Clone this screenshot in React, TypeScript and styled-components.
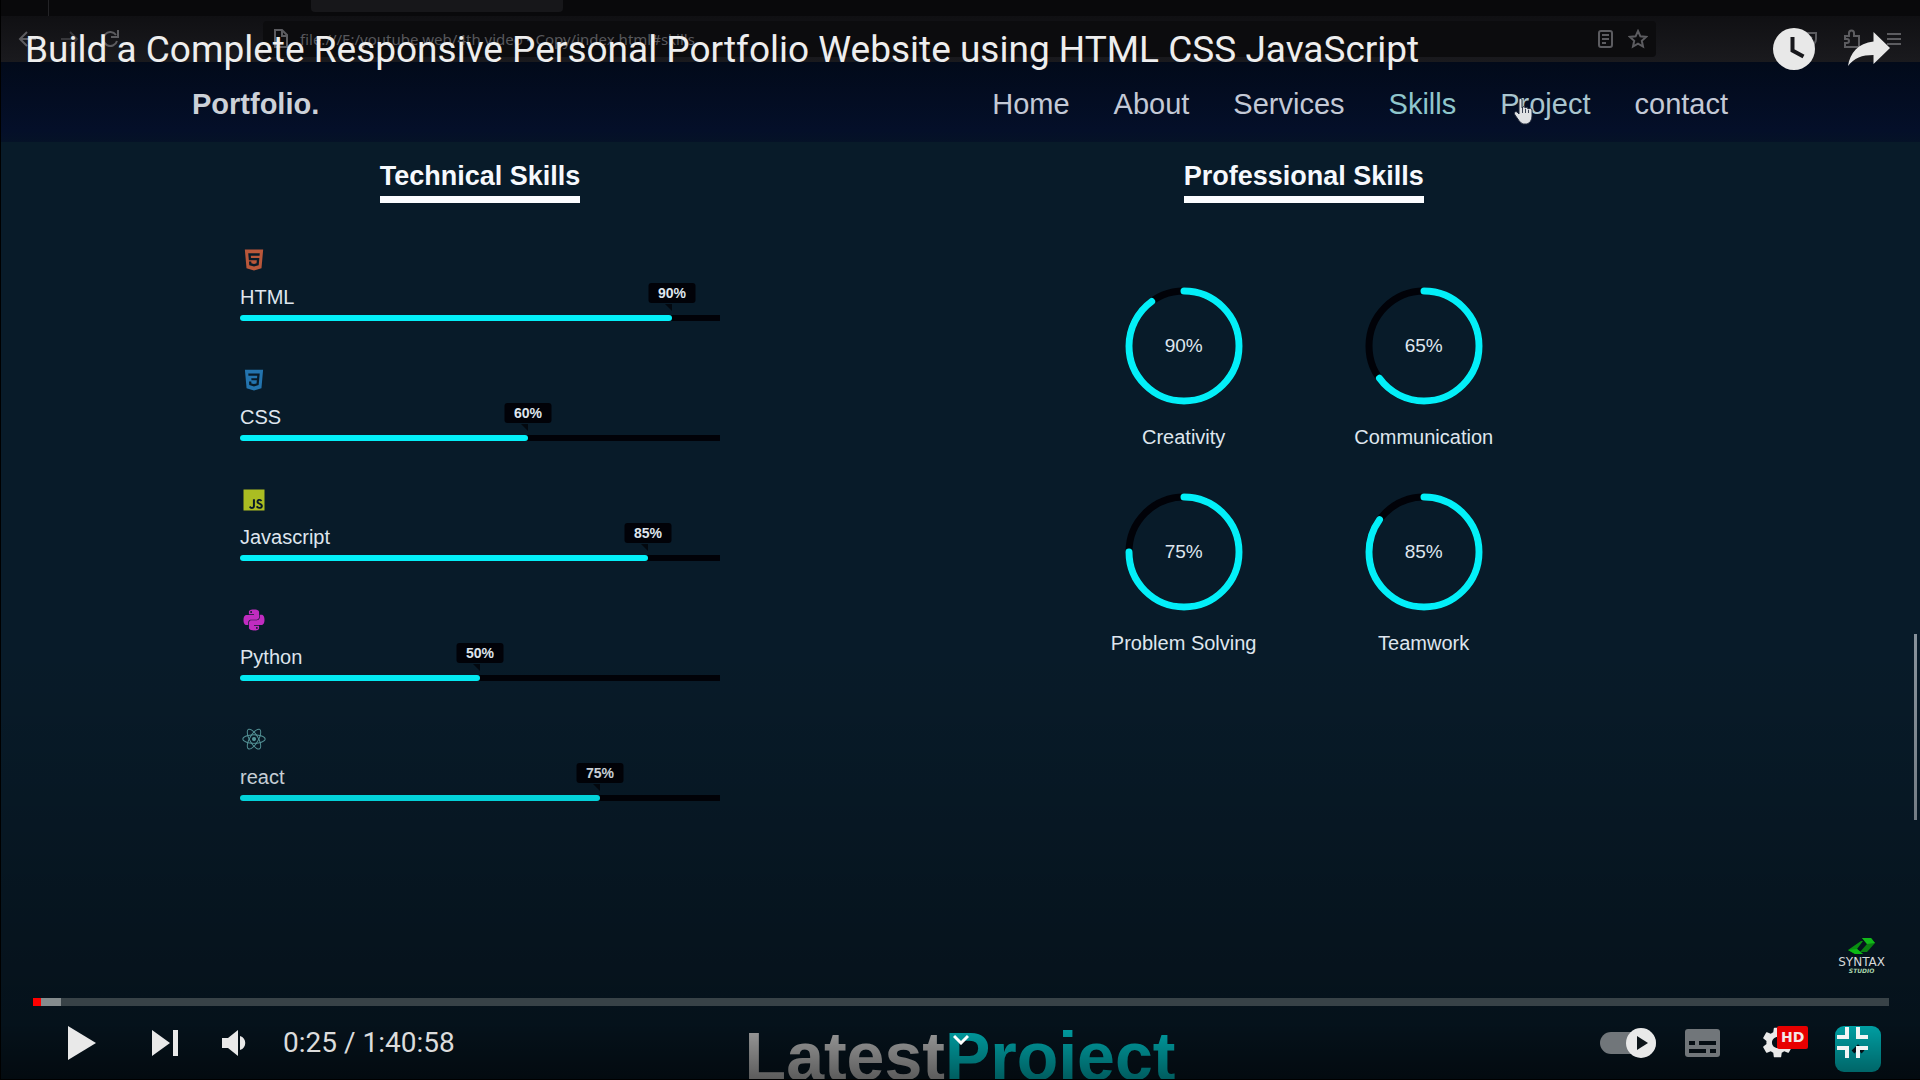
import React from "react";
import styled, { createGlobalStyle } from "styled-components";
import {
  BiLogoCss3,
  BiLogoHtml5,
  BiLogoJavascript,
  BiLogoPython,
  BiLogoReact,
} from "react-icons/bi";
import { MdSettings } from "react-icons/md";

const sans = `"Liberation Sans", Arial, sans-serif`;
const roboto = `Roboto, sans-serif`;

const GlobalStyle = createGlobalStyle`
  *, *::before, *::after { box-sizing: border-box; }
  body { margin: 0; background: #000; color: #dfe6ee; font-family: ${sans}; }
  h1, h2, h3, p, ul { margin: 0; padding: 0; }
  ul { list-style: none; }
  a { color: inherit; text-decoration: none; }
  button { border: 0; padding: 0; background: none; color: inherit; cursor: pointer; }
  svg { display: block; }
`;

const Stage = styled.div`
  position: relative;
  height: 100vh;
  overflow: hidden;
  border-bottom: 1px solid #000;
  background: #081b29;
`;

/* ---------- recorded browser window ---------- */

const TabStrip = styled.div`
  display: flex;
  height: 16px;
  background: #09090b;
`;

const PinnedTab = styled.div`
  width: 49px;
  border-right: 1px solid #232326;
`;

const ActiveTab = styled.div`
  width: 252px;
  height: 12px;
  margin-left: 262px;
  border-radius: 0 0 4px 4px;
  background: #17171a;
`;

const Toolbar = styled.div`
  display: flex;
  align-items: center;
  height: 46px;
  padding: 0 18px;
  background: linear-gradient(#101013, #1a1a1e);
  color: #5c5c60;
`;

const ToolGroup = styled.div<{ $gap: number }>`
  display: flex;
  align-items: center;
  gap: ${(p) => p.$gap}px;
`;

const AddressBar = styled.div`
  display: flex;
  align-items: center;
  gap: 11px;
  flex: 1;
  height: 36px;
  margin: 0 144px 0 143px;
  padding: 0 8px 0 10px;
  border-radius: 4px;
  background: #0c0c0e;
  font: 15px/24px "Noto Sans", sans-serif;
`;

const Address = styled.span`
  flex: 1;
  white-space: nowrap;
  color: #58585c;
`;

/* ---------- portfolio page ---------- */

const NavBar = styled.header`
  display: flex;
  align-items: center;
  justify-content: space-between;
  height: 80px;
  padding: 4px 10% 0;
  background: linear-gradient(#020a1a, #040f29 85%, #051227);
`;

const Brand = styled.a`
  color: #ccd1d8;
  font-size: 29px;
  line-height: 32px;
  font-weight: 700;
`;

const NavLinks = styled.nav`
  display: flex;
  gap: 44px;
  font-size: 29px;
  line-height: 32px;
`;

const NavLink = styled.a<{ $tone?: string }>`
  position: relative;
  color: ${(p) => p.$tone ?? "#c3c9d6"};
`;

const Hand = styled.svg`
  position: absolute;
  left: 13px;
  top: 9px;
`;

const Skills = styled.main`
  display: grid;
  grid-template-columns: 1fr 1fr;
  column-gap: 17.9vw;
  padding: 18px 19.6% 215px 12.5%;
`;

const Column = styled.section`
  display: flex;
  flex-direction: column;
  align-items: center;
`;

const ColumnTitle = styled.h2`
  padding-bottom: 4px;
  border-bottom: 7px solid #fbfdff;
  color: #f6f9fd;
  font-size: 27px;
  line-height: 32px;
`;

const SkillList = styled.ul`
  display: grid;
  row-gap: 45px;
  width: 100%;
  margin-top: 43px;
`;

const SkillIcon = styled.span<{ $color: string }>`
  display: block;
  color: ${(p) => p.$color};
`;

const SkillName = styled.h3`
  margin-top: 11px;
  font-size: 20px;
  line-height: 24px;
  font-weight: 400;
`;

const Track = styled.div`
  height: 6px;
  margin-top: 6px;
  border-radius: 3px 0 0 3px;
  background: #010208;
`;

const Fill = styled.div`
  position: relative;
  height: 6px;
  border-radius: 3px;
  background: #03eff8;
`;

const Bubble = styled.span`
  position: absolute;
  right: 0;
  bottom: 18px;
  transform: translateX(50%);
  width: 47px;
  border-radius: 3px;
  background: #010208;
  font-size: 14px;
  line-height: 20px;
  font-weight: 700;
  text-align: center;
`;

const Notch = styled.span`
  position: absolute;
  right: 0;
  bottom: 10px;
  border-top: 7px solid #03080f;
  border-left: 7px solid transparent;
`;

const DialGrid = styled.div`
  display: grid;
  grid-template-columns: 1fr 1fr;
  row-gap: 43px;
  width: 100%;
  margin-top: 83px;
`;

const Dial = styled.figure`
  display: flex;
  flex-direction: column;
  align-items: center;
  margin: 0;
`;

const DialFace = styled.div`
  display: grid;
  place-items: center;
  font-size: 19px;
  line-height: 24px;
  & > * {
    grid-area: 1 / 1;
  }
`;

const DialLabel = styled.figcaption`
  margin-top: 19px;
  font-size: 20px;
  line-height: 24px;
`;

const NextHeading = styled.h2`
  color: #f2f2f2;
  font-size: 68px;
  line-height: 80px;
  text-align: center;
  span {
    color: #00f4fa;
  }
`;

const BackToTop = styled.a`
  position: absolute;
  right: 39px;
  bottom: 7px;
  display: grid;
  place-items: center;
  width: 46px;
  height: 46px;
  border-radius: 9px;
  background: #00f4fa;
`;

const PageScroll = styled.div`
  position: absolute;
  right: 3px;
  top: 634px;
  width: 3px;
  height: 186px;
  background: #87919a;
`;

/* ---------- video player ---------- */

const Player = styled.div`
  position: absolute;
  inset: 0;
  display: flex;
  flex-direction: column;
  border-left: 1px solid #000;
  color: #e9e9e9;
  font-family: ${roboto};
  background: linear-gradient(
    transparent 60%,
    rgba(0, 0, 0, 0.12) 74%,
    rgba(0, 0, 0, 0.25) 85%,
    rgba(0, 0, 0, 0.35) 95%,
    rgba(0, 0, 0, 0.46) 97%,
    rgba(0, 0, 0, 0.62) 100%
  );
`;

const PlayerTop = styled.div`
  display: flex;
  align-items: flex-start;
  padding: 28px 14px 0 24px;
`;

const VideoTitle = styled.h1`
  flex: 1;
  color: #eee;
  font-size: 37px;
  line-height: 44px;
  font-weight: 400;
  white-space: nowrap;
`;

const IconButton = styled.button<{ $width?: number }>`
  display: flex;
  align-items: center;
  justify-content: center;
  width: ${(p) => p.$width ?? 75}px;
  height: 42px;
`;

const Watermark = styled.a`
  display: flex;
  flex-direction: column;
  align-items: center;
  align-self: flex-end;
  margin: auto 35px 24px 0;
  color: #d5d9da;
  font-family: "DejaVu Sans", sans-serif;
`;

const MarkName = styled.span`
  margin-top: 2px;
  font-size: 12px;
  line-height: 11px;
`;

const MarkSub = styled.span`
  color: #a9d3ac;
  font-size: 6px;
  line-height: 6px;
  font-weight: 700;
  font-style: italic;
`;

const Seek = styled.input<{ $played: number; $loaded: number }>`
  appearance: none;
  display: block;
  height: 8px;
  margin: 0 31px 0 32px;
  background: linear-gradient(
    to right,
    #f00 ${(p) => p.$played}%,
    #858c8e ${(p) => p.$played}% ${(p) => p.$loaded}%,
    #384247 ${(p) => p.$loaded}%
  );
  &::-webkit-slider-thumb {
    appearance: none;
    width: 0;
    height: 0;
  }
`;

const Controls = styled.div`
  display: flex;
  align-items: center;
  height: 73px;
  padding: 0 30px 0 32px;
`;

const Time = styled.span`
  flex: 1;
  margin-left: 14px;
  color: #dcdcdc;
  font-size: 28px;
  line-height: 32px;
`;

const Autoplay = styled.label`
  display: flex;
  justify-content: center;
  width: 75px;
`;

const Switch = styled.input`
  appearance: none;
  display: flex;
  align-items: center;
  justify-content: flex-end;
  width: 56px;
  height: 22px;
  margin: 0;
  border-radius: 11px;
  background: #71767a;
  &::before {
    content: "";
    width: 30px;
    height: 30px;
    flex: none;
    border-radius: 50%;
    background: #e9e9e9;
  }
`;

const SwitchBox = styled.span`
  display: grid;
  align-items: center;
  justify-items: end;
  & > * {
    grid-area: 1 / 1;
  }
  svg {
    z-index: 1;
    pointer-events: none;
  }
`;

const Settings = styled(IconButton)`
  position: relative;
`;

const Quality = styled.span`
  position: absolute;
  left: 37px;
  top: 4px;
  padding: 0 4px;
  border-radius: 2px;
  background: #e80000;
  color: #f3e8e8;
  font: 700 14px/23px "DejaVu Sans", sans-serif;
`;

const MoreButton = styled.button`
  position: absolute;
  left: 50%;
  bottom: 34px;
  transform: translateX(-50%);
`;

const skills = [
  { name: "HTML", value: 90, color: "#b9573a", Icon: BiLogoHtml5 },
  { name: "CSS", value: 60, color: "#2374ae", Icon: BiLogoCss3 },
  { name: "Javascript", value: 85, color: "#abbd22", Icon: BiLogoJavascript },
  { name: "Python", value: 50, color: "#c02cc0", Icon: BiLogoPython },
  { name: "react", value: 75, color: "#5a9ea2", Icon: BiLogoReact },
];

const dials = [
  { name: "Creativity", value: 90 },
  { name: "Communication", value: 65 },
  { name: "Problem Solving", value: 75 },
  { name: "Teamwork", value: 85 },
];

const line = { fill: "none", stroke: "currentColor", strokeWidth: 2 } as const;

function BrowserChrome() {
  return (
    <>
      <TabStrip>
        <PinnedTab />
        <ActiveTab />
      </TabStrip>
      <Toolbar>
        <ToolGroup $gap={21}>
          <svg width="20" height="20" {...line}>
            <path d="M18 10H3M9 3l-7 7 7 7" />
          </svg>
          <svg width="20" height="20" {...line} opacity=".5">
            <path d="M2 10h15M11 3l7 7-7 7" />
          </svg>
          <svg width="20" height="20" {...line}>
            <path d="M17 12a7 7 0 1 1-1-6M18 1v7h-7" />
          </svg>
        </ToolGroup>
        <AddressBar>
          <svg width="16" height="20" {...line}>
            <path d="M2 1h7l5 5v12H2zM9 1v6h5" />
          </svg>
          <Address>file:///E:/youtube web/4th video - Copy/index.html#skills</Address>
          <ToolGroup $gap={14}>
            <svg width="16" height="18" {...line}>
              <rect x="1" y="1" width="13" height="16" rx="2" />
              <path d="M4 5h7M4 9h7M4 13h4" />
            </svg>
            <svg width="20" height="20" {...line}>
              <path d="M10 2l2.400 5.300 5.600.6-4.200 3.900 1.200 5.700-5-2.900-5 2.900 1.200-5.700L2 7.900l5.600-.6z" />
            </svg>
          </ToolGroup>
        </AddressBar>
        <ToolGroup $gap={25}>
          <svg width="18" height="16" {...line}>
            <path d="M2 2h14v6a7 7 0 0 1-14 0zM6 6l3 3 3-3" />
          </svg>
          <svg width="18" height="20" {...line}>
            <path d="M2 7h4V4a2 2 0 0 1 5 0v3h5v11H2v-4h2a2 2 0 0 0 0-4H2z" />
          </svg>
          <svg width="16" height="14" {...line}>
            <path d="M1 2h14M1 7h14M1 12h14" />
          </svg>
        </ToolGroup>
      </Toolbar>
    </>
  );
}

function DialChart({ name, value }: { name: string; value: number }) {
  return (
    <Dial>
      <DialFace>
        <svg width="120" height="120" viewBox="0 0 120 120">
          <circle cx="60" cy="60" r="55" fill="none" stroke="#010208" strokeWidth="7" />
          <circle
            cx="60"
            cy="60"
            r="55"
            fill="none"
            stroke="#03eff8"
            strokeWidth="7"
            strokeLinecap="round"
            pathLength="100"
            strokeDasharray={`${value} 100`}
            transform="rotate(-90 60 60)"
          />
        </svg>
        <span>{value}%</span>
      </DialFace>
      <DialLabel>{name}</DialLabel>
    </Dial>
  );
}

function PortfolioPage() {
  return (
    <>
      <NavBar>
        <Brand href="#home">Portfolio.</Brand>
        <NavLinks>
          <NavLink href="#home">Home</NavLink>
          <NavLink href="#about">About</NavLink>
          <NavLink href="#services">Services</NavLink>
          <NavLink href="#skills" $tone="#8fc6cc">Skills</NavLink>
          <NavLink href="#project" $tone="#a9c5cf">
            Project
            <Hand width="20" height="28" viewBox="0 0 20 28">
              <path
                d="M6 3c0-2 3-2 3 0v8l1-1c1-1 2 0 2 1 1-1 3-1 3 1 1-1 4-1 4 1v6c0 4-2 7-5 8h-4c-3-1-5-5-8-9-2-3 1-4 2-3l2 2z"
                fill="#dfe1e4"
                stroke="#20283a"
                strokeWidth="1"
              />
              <path d="M9.500 11v5M12.500 12v4M15.500 13v3" stroke="#3a4254" strokeWidth="1" />
            </Hand>
          </NavLink>
          <NavLink href="#contact">contact</NavLink>
        </NavLinks>
      </NavBar>
      <Skills id="skills">
        <Column>
          <ColumnTitle>Technical Skills</ColumnTitle>
          <SkillList>
            {skills.map(({ name, value, color, Icon }) => (
              <li key={name}>
                <SkillIcon $color={color}>
                  <Icon size={28} />
                </SkillIcon>
                <SkillName>{name}</SkillName>
                <Track
                  role="progressbar"
                  aria-label={name}
                  aria-valuenow={value}
                  aria-valuemin={0}
                  aria-valuemax={100}
                >
                  <Fill style={{ width: `${value}%` }}>
                    <Bubble>{value}%</Bubble>
                    <Notch />
                  </Fill>
                </Track>
              </li>
            ))}
          </SkillList>
        </Column>
        <Column>
          <ColumnTitle>Professional Skills</ColumnTitle>
          <DialGrid>
            {dials.map((d) => (
              <DialChart key={d.name} {...d} />
            ))}
          </DialGrid>
        </Column>
      </Skills>
      <NextHeading>
        Latest<span>Project</span>
      </NextHeading>
      <PageScroll />
      <BackToTop href="#home" aria-label="Back to top">
        <svg width="14" height="10" viewBox="0 0 14 10">
          <path d="M2 8l5-5 5 5" fill="none" stroke="#081b29" strokeWidth="4" />
        </svg>
      </BackToTop>
    </>
  );
}

function VideoPlayer() {
  return (
    <Player>
      <PlayerTop>
        <VideoTitle>
          Build a Complete Responsive Personal Portfolio Website using HTML CSS JavaScript
        </VideoTitle>
        <IconButton aria-label="Watch later">
          <svg width="42" height="42" viewBox="0 0 42 42">
            <circle cx="21" cy="21" r="21" fill="#e8e8e8" />
            <path d="M19.500 9v13.500l11 6" fill="none" stroke="#17171b" strokeWidth="4" />
          </svg>
        </IconButton>
        <IconButton aria-label="Share">
          <svg width="42" height="34" viewBox="0 0 42 34" fill="#e8e8e8">
            <path d="M25.500 0L42 16 25.500 32v-9C14 23 6 26 0 34 2 21 10 11 25.500 9.500z" />
          </svg>
        </IconButton>
      </PlayerTop>

      <Watermark href="#channel" aria-label="Syntax Studio">
        <svg width="28" height="17" viewBox="0 0 28 17">
          <path d="M13 3L0 12l7 4h8l-6-5 6-8z" fill="#0a8f12" />
          <path d="M0 12l7 4h8l-6-5z" fill="#0bb914" />
          <path d="M14 0h9l4 5-8 9h-7l7-8z" fill="#0a7f11" />
          <path d="M14 0h9l4 5-8 1z" fill="#12b81a" />
        </svg>
        <MarkName>SYNTAX</MarkName>
        <MarkSub>STUDIO</MarkSub>
      </Watermark>

      <Seek
        type="range"
        aria-label="Seek"
        min={0}
        max={6058}
        defaultValue={25}
        $played={0.42}
        $loaded={1.5}
      />
      <Controls>
        <IconButton $width={98} aria-label="Play">
          <svg width="28" height="34" fill="currentColor">
            <path d="M0 0l28 17L0 34z" />
          </svg>
        </IconButton>
        <IconButton $width={68} aria-label="Next">
          <svg width="26" height="26" fill="currentColor">
            <path d="M0 0l18 13L0 26zM21 0h5v26h-5z" />
          </svg>
        </IconButton>
        <IconButton $width={70} aria-label="Mute">
          <svg width="24" height="26" fill="currentColor">
            <path d="M0 8h6l10-8v26L6 18H0zM18 6c7 2 7 12 0 14z" />
          </svg>
        </IconButton>
        <Time>0:25 / 1:40:58</Time>
        <Autoplay>
          <SwitchBox>
            <Switch type="checkbox" defaultChecked aria-label="Autoplay" />
            <svg width="30" height="30" viewBox="0 0 30 30">
              <path d="M11 8l11 7-11 7z" fill="#0c1419" />
            </svg>
          </SwitchBox>
        </Autoplay>
        <IconButton aria-label="Subtitles">
          <svg width="35" height="28" viewBox="0 0 35 28">
            <rect width="35" height="28" rx="3" fill="#71767a" />
            <path d="M4 12h6v4H4zM14 12h17v4H14zM4 20h17v4H4zM25 20h6v4h-6z" fill="#050d13" />
          </svg>
        </IconButton>
        <Settings aria-label="Settings">
          <MdSettings size={37} />
          <Quality>HD</Quality>
        </Settings>
        <IconButton aria-label="Exit full screen">
          <svg width="31" height="31" viewBox="0 0 31 31" fill="#f2f5f5">
            <path d="M8 0h4v12H0V8h8zM19 0h4v8h8v4H19zM0 19h12v12H8v-8H0zM19 19h12v4h-8v8h-4z" />
          </svg>
        </IconButton>
      </Controls>
      <MoreButton aria-label="More">
        <svg width="16" height="11" viewBox="0 0 16 11">
          <path d="M1 2l7 7 7-7" fill="none" stroke="#fff" strokeWidth="3" />
        </svg>
      </MoreButton>
    </Player>
  );
}

export default function App() {
  return (
    <>
      <GlobalStyle />
      <Stage>
        <BrowserChrome />
        <PortfolioPage />
        <VideoPlayer />
      </Stage>
    </>
  );
}
